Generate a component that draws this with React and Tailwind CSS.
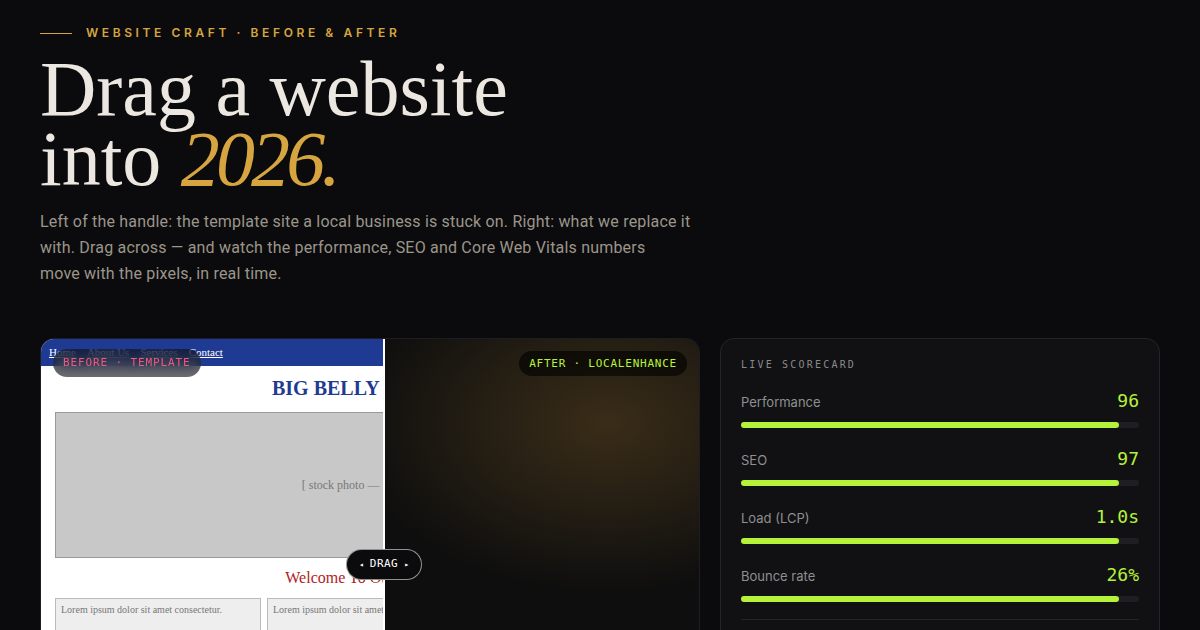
const metrics = [
  { label: "Performance", value: "96", pct: 95 },
  { label: "SEO", value: "97", pct: 95 },
  { label: "Load (LCP)", value: "1.0s", pct: 95 },
  { label: "Bounce rate", value: "26%", pct: 95 },
];

const mono = "font-['DejaVu_Sans_Mono',monospace]";
const serif = "font-['Liberation_Serif',serif]";

// the dated template site that sits on the left of the handle
const TemplateSite = () => (
  <div className={`w-[658px] h-full bg-white ${serif}`}>
    <div className="h-[27px] bg-[#1f3a93] flex items-center gap-[11px] px-2 text-[11px] text-white">
      <a className="underline">Home</a>
      <a className="underline">About Us</a>
      <a className="underline">Services</a>
      <a className="underline">Contact</a>
    </div>
    <div className="px-[14px]">
      <h2 className="mt-[10px] text-center text-[20px] leading-[24px] font-bold text-[#1f3a93]">
        BIG BELLY ITALIAN
      </h2>
      <div className="mt-[12px] h-[146px] border border-[#999] bg-[#c8c8c8] flex items-center justify-center text-[12px] text-[#777]">
        [ stock photo — 1024×768 ]
      </div>
      <p className="mt-[10px] text-center text-[16px] leading-[20px] text-[#b22222]">
        Welcome To Our Website!
      </p>
      <div className="mt-[10px] grid grid-cols-3 gap-[6px]">
        {[0, 1, 2].map((i) => (
          <div key={i} className="h-[80px] border border-[#bbb] bg-[#eee] px-[5px] py-[3px] text-[10px] text-[#777]">
            Lorem ipsum dolor sit amet consectetur.
          </div>
        ))}
      </div>
    </div>
  </div>
);

const App = () => {
  return (
    <div className="w-[1200px] h-[630px] overflow-hidden bg-[#0b0b0d] px-10 pt-[26px] font-['Inter',sans-serif]">
      <div className="flex items-center gap-[14px]">
        <span className="block w-8 h-px bg-[#d6a540]" />
        <span className="text-[12px] leading-[14px] font-semibold tracking-[0.3em] text-[#d6a540]">
          WEBSITE CRAFT · BEFORE &amp; AFTER
        </span>
      </div>

      <h1 className={`mt-[14px] text-[78px] leading-[70px] text-[#ece8e1] ${serif}`}>
        Drag a website
        <br />
        into <em className="text-[#d6a540] tracking-[-0.05em]">2026.</em>
      </h1>

      <p className="mt-[15px] w-[665px] font-['Roboto',sans-serif] text-[16px] leading-[26px] tracking-[0.012em] text-[#9c968a]">
        Left of the handle: the template site a local business is stuck on. Right: what we replace it
        with. Drag across — and watch the performance, SEO and Core Web Vitals numbers
        <br />
        move with the pixels, in real time.
      </p>

      <div className="mt-[51px] grid grid-cols-[660px_440px] gap-5">
        {/* before / after slider */}
        <div className="relative h-[450px] rounded-[14px] border border-[#1e1e22] overflow-hidden bg-[#0e0e0e]">
          <div className="absolute inset-0 bg-[radial-gradient(260px_170px_at_566px_84px,#3a2d18,#0e0e0e)]" />
          <div className="absolute left-0 top-0 bottom-0 w-[342px] overflow-hidden">
            <TemplateSite />
          </div>
          <div className="absolute left-[342px] top-0 bottom-0 w-[2px] bg-white" />

          <span className={`absolute left-3 top-[10px] rounded-full bg-black/55 backdrop-blur-sm px-[10px] py-[7px] text-[11px] leading-[14px] tracking-[0.08em] text-[#f0587c] ${mono}`}>
            BEFORE · TEMPLATE
          </span>
          <span className={`absolute right-3 top-3 rounded-full bg-black/60 px-[10px] py-[6px] text-[11px] leading-[13px] tracking-[0.07em] text-[#b6f23a] ${mono}`}>
            AFTER · LOCALENHANCE
          </span>

          <div className={`absolute left-[305px] top-[210px] h-[31px] w-[76px] rounded-full border border-white/55 bg-[#0b0b0d] flex items-center justify-center gap-[6px] text-white ${mono}`}>
            <span className="text-[8px]">◂</span>
            <span className="text-[11px] tracking-[0.04em]">DRAG</span>
            <span className="text-[8px]">▸</span>
          </div>
        </div>

        {/* scorecard */}
        <div className="h-[450px] rounded-[14px] border border-[#232328] bg-[#111114] px-5 pt-[19px]">
          <div className={`text-[10px] leading-[14px] tracking-[0.22em] text-[#8a8a8a] ${mono}`}>
            LIVE SCORECARD
          </div>
          <div className="mt-[17px] flex flex-col gap-[19px]">
            {metrics.map((m) => (
              <div key={m.label}>
                <div className="h-6 flex items-baseline justify-between">
                  <span className="text-[13px] text-[#8f8f8f]">{m.label}</span>
                  <span className={`text-[18px] leading-6 text-[#b6f23a] ${mono}`}>{m.value}</span>
                </div>
                <div className="mt-[9px] h-[6px] rounded-full bg-[#1f1f23]">
                  <div className="h-full rounded-full bg-[#b6f23a]" style={{ width: `${m.pct}%` }} />
                </div>
              </div>
            ))}
          </div>
          <div className="mt-[17px] h-px bg-[#26262a]" />
        </div>
      </div>
    </div>
  );
};

export default App;
